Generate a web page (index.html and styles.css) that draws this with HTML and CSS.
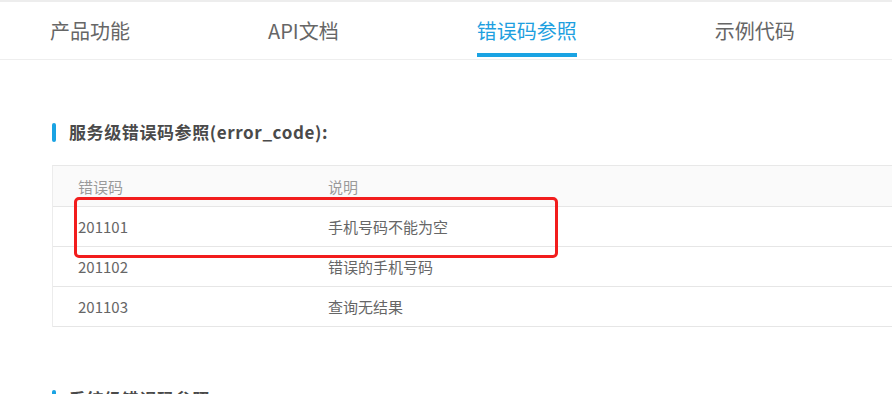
FILE: index.html
```html
<!DOCTYPE html>
<html lang="zh-CN">
<head>
<meta charset="utf-8">
<title>错误码参照</title>
<link rel="stylesheet" href="styles.css">
</head>
<body>
<div class="page">
  <div class="topline"></div>
  <nav class="tabs">
    <a class="tab">产品功能</a>
    <a class="tab">API文档</a>
    <a class="tab active">错误码参照</a>
    <a class="tab">示例代码</a>
  </nav>
  <main class="content">
    <h2 class="section-title">服务级错误码参照(error_code):</h2>
    <div class="table-wrap">
      <div class="table">
        <div class="row head">
          <div class="cell">错误码</div>
          <div class="cell">说明</div>
        </div>
        <div class="row">
          <div class="cell">201101</div>
          <div class="cell">手机号码不能为空</div>
        </div>
        <div class="row">
          <div class="cell">201102</div>
          <div class="cell">错误的手机号码</div>
        </div>
        <div class="row">
          <div class="cell">201103</div>
          <div class="cell">查询无结果</div>
        </div>
      </div>
      <div class="highlight"></div>
    </div>
    <h2 class="section-title second">系统级错误码参照</h2>
  </main>
</div>
</body>
</html>
```
FILE: styles.css
```css
html, body {
  margin: 0;
  padding: 0;
  background: #fff;
  overflow: hidden;
}
body {
  font-family: "Noto Sans CJK SC", "Noto Sans", "Liberation Sans", sans-serif;
  color: #666;
}
.page {
  width: 892px;
  height: 394px;
  overflow: hidden;
}
.topline {
  height: 2px;
  background: #ededed;
}
.tabs {
  display: flex;
  gap: 138px;
  padding-left: 50px;
  height: 57px;
  border-bottom: 1px solid #eeeeee;
}
.tab {
  position: relative;
  display: flex;
  align-items: center;
  height: 57px;
  font-size: 20px;
  color: #666;
  white-space: nowrap;
}
.tab.active {
  color: #1e9fe0;
}
.tab.active::after {
  content: "";
  position: absolute;
  left: 0;
  right: 0;
  bottom: 2px;
  height: 4px;
  background: #1aa3e3;
}
.content {
  padding: 62px 0 0 52px;
}
.section-title {
  display: flex;
  align-items: center;
  gap: 13px;
  margin: 0;
  height: 20px;
  font-size: 17px;
  line-height: 20px;
  letter-spacing: 0.6px;
  font-weight: bold;
  color: #4a4a4a;
  white-space: nowrap;
}
.section-title::before {
  content: "";
  width: 4px;
  height: 19px;
  border-radius: 2px;
  background: #1aa3e3;
}
.section-title.second {
  margin-top: 62px;
}
.table-wrap {
  position: relative;
  margin-top: 23px;
  width: 900px;
}
.table {
  border-top: 1px solid #e8e8e8;
  border-left: 1px solid #ececec;
}
.row {
  display: grid;
  grid-template-columns: 250px 1fr;
  height: 39px;
  align-items: center;
  border-bottom: 1px solid #e6e6e6;
  font-size: 15px;
  color: #666;
}
.row.head {
  height: 40px;
  background: #fafafa;
  color: #9a9a9a;
}
.cell {
  padding-left: 25px;
  white-space: nowrap;
}
.highlight {
  position: absolute;
  left: 22px;
  top: 32px;
  width: 478px;
  height: 55px;
  border: 3px solid #f21d1d;
  border-radius: 5px;
}
```
